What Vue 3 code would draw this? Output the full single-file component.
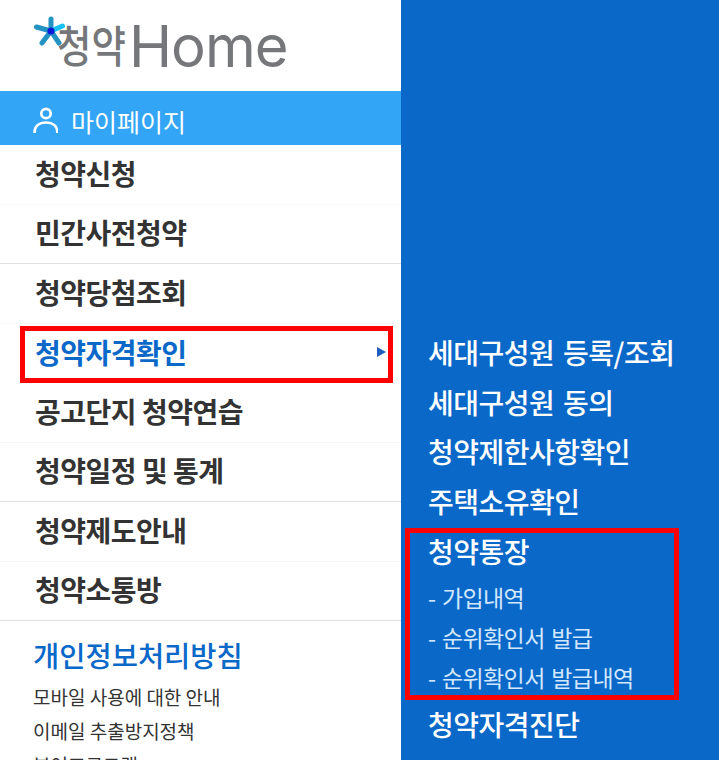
<script setup>
const menu = [
  { label: '청약신청' },
  { label: '민간사전청약' },
  { label: '청약당첨조회' },
  { label: '청약자격확인', active: true },
  { label: '공고단지 청약연습' },
  { label: '청약일정 및 통계' },
  { label: '청약제도안내' },
  { label: '청약소통방' }
]
const foot = ['모바일 사용에 대한 안내', '이메일 추출방지정책', '뷰어프로그램']
const subTop = ['세대구성원 등록/조회', '세대구성원 동의', '청약제한사항확인', '주택소유확인']
const subChild = ['- 가입내역', '- 순위확인서 발급', '- 순위확인서 발급내역']
</script>

<template>
  <div class="page">
    <aside class="left">
      <div class="logo">
        <span class="logo-ko">청약</span><span class="logo-en">Home</span>
        <svg class="star" viewBox="0 0 32 32" width="32" height="32">
          <g stroke-width="5" stroke-linecap="round">
            <path d="M18 16V4" stroke="#2492c2" />
            <path d="M18 16L3.500 12" stroke="#2492c2" />
            <path d="M18 16L29.500 11" stroke="#17c0f0" />
            <path d="M18 16L9 28" stroke="#2492c2" />
            <path d="M18 16L26 28" stroke="#2492c2" />
          </g>
          <circle cx="18" cy="16" r="3.500" fill="#0a18d8" />
        </svg>
      </div>
      <div class="mypage">
        <svg viewBox="0 0 26 28" width="26" height="28" fill="none" stroke="#fff" stroke-width="2.700">
          <circle cx="14" cy="7.500" r="4.700" />
          <path d="M2.500 27c0-7 5-10.500 11.500-10.500s11.500 3.500 11.500 10.500" />
        </svg>
        <span>마이페이지</span>
      </div>
      <ul class="menu">
        <li v-for="m in menu" :key="m.label" :class="{ active: m.active }">
          <span>{{ m.label }}</span>
          <i v-if="m.active" class="arrow"></i>
        </li>
      </ul>
      <div class="foot">
        <div class="privacy">개인정보처리방침</div>
        <div v-for="f in foot" :key="f" class="foot-link">{{ f }}</div>
      </div>
    </aside>
    <section class="right">
      <div v-for="s in subTop" :key="s" class="sub">{{ s }}</div>
      <div class="group">
        <div class="sub">청약통장</div>
        <div v-for="c in subChild" :key="c" class="child">{{ c }}</div>
      </div>
      <div class="sub">청약자격진단</div>
    </section>
  </div>
</template>

<style scoped>
.page {
  display: flex;
  width: 719px;
  height: 760px;
  overflow: hidden;
  background: #fff;
  font-family: "Noto Sans CJK KR", "Noto Sans", sans-serif;
}
.left {
  width: 401px;
  flex: none;
}
.logo {
  height: 91px;
  box-sizing: border-box;
  padding: 17px 0 0 57px;
  display: flex;
  align-items: flex-start;
  color: #75777b;
  position: relative;
}
.star {
  position: absolute;
  left: 33px;
  top: 15px;
}
.logo-ko {
  display: inline-block;
  width: 72px;
  font-size: 44px;
  line-height: 54px;
  font-weight: 500;
  white-space: nowrap;
  transform: scaleX(0.85);
  transform-origin: left center;
}
.logo-en {
  font-family: "Inter", sans-serif;
  font-size: 58px;
  line-height: 58px;
  font-weight: 400;
  letter-spacing: -1px;
}
.mypage {
  height: 54px;
  background: #33a5f6;
  color: #fff;
  display: flex;
  align-items: center;
  padding-left: 32px;
  gap: 13px;
  font-size: 25px;
}
.mypage svg {
  margin-top: 3px;
}
.mypage span {
  padding-top: 6px;
}
.menu {
  list-style: none;
  margin: 0;
  padding: 0;
}
.menu li {
  height: 59.500px;
  box-sizing: border-box;
  display: flex;
  align-items: center;
  justify-content: space-between;
  padding: 0 15px 3px 35px;
  font-size: 28px;
  font-weight: 700;
  color: #333;
  letter-spacing: -0.500px;
  border-bottom: 1px solid #f6f6f6;
}
.menu li:nth-child(even) {
  border-bottom-color: #e0e0e0;
}
.menu li.active {
  color: #0a68c9;
  outline: 5px solid #f00;
  outline-offset: -5px;
  margin: 2.500px 8px 0 20px;
  padding: 0 7px 5px 15px;
  border-bottom: 0;
  height: 57px;
}
.arrow {
  width: 0;
  height: 0;
  border-left: 9px solid #1f5cc0;
  border-top: 5.500px solid transparent;
  border-bottom: 5.500px solid transparent;
}
.foot {
  padding: 14px 0 0 33px;
}
.privacy {
  font-size: 28.500px;
  line-height: 40px;
  color: #0a68c9;
  font-weight: 500;
  margin-bottom: 5px;
}
.foot-link {
  font-size: 19px;
  line-height: 34px;
  color: #333;
}
.right {
  flex: 1;
  background: #0a68c9;
  padding: 328px 0 0 27px;
  color: #fff;
}
.sub {
  font-size: 28px;
  line-height: 49.500px;
  letter-spacing: -0.500px;
  word-spacing: 3px;
  font-weight: 500;
}
.group {
  border: 5px solid #f00;
  width: 274px;
  height: 172px;
  box-sizing: border-box;
  margin: 2px 0 0 -23px;
  padding: 0 0 0 18px;
}
.group .sub {
  line-height: 36px;
  margin-bottom: 8px;
}
.child {
  font-size: 23px;
  line-height: 40px;
  letter-spacing: -0.600px;
  word-spacing: 2px;
  color: #d3e8fd;
}
</style>
